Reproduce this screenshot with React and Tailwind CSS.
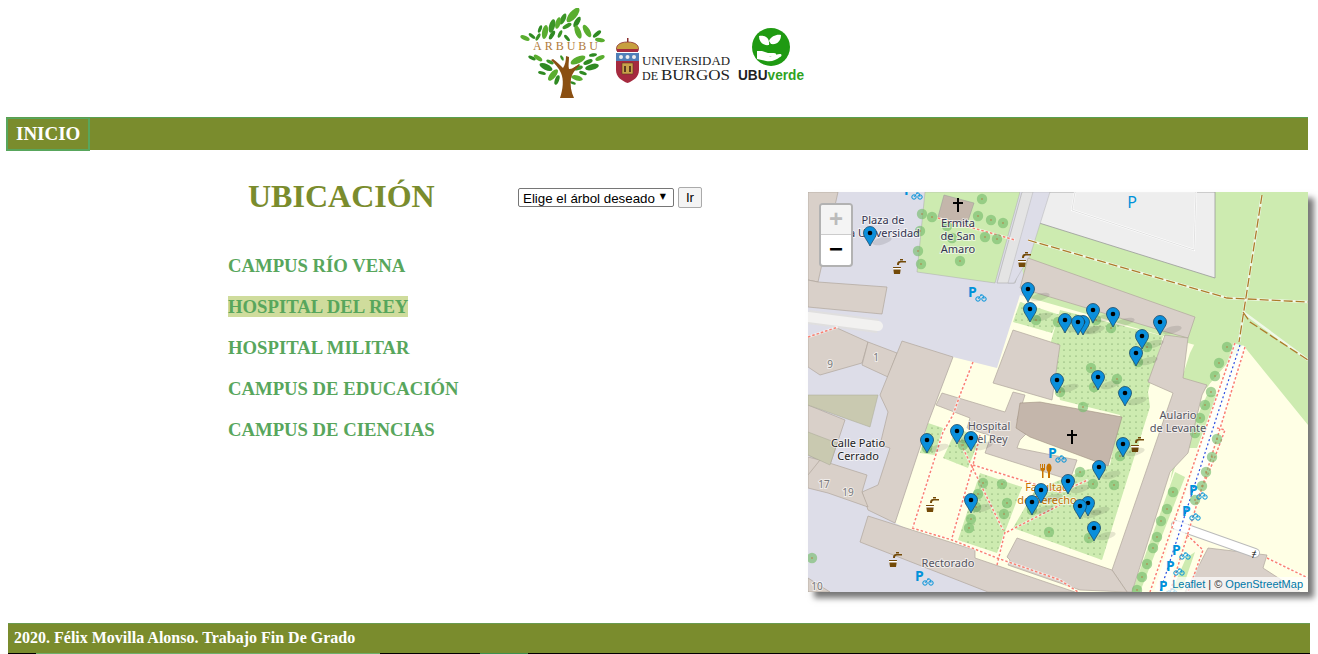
import React from 'react';

const serif = { fontFamily: '"Liberation Serif", serif' };

const trees = [
  [982,199],[922,214],[932,217],[978,216],[991,220],[1003,223],[947,226],[920,231],[985,237],[997,239],[952,238],[918,251],[921,264],[960,261],
  [1036,320],[1058,322],[1096,320],[1111,328],[1147,347],[1138,362],[1091,368],[1117,379],[1094,387],[1060,392],
  [1227,347],[1219,363],[1215,376],[1211,392],[963,445],[927,448],[983,483],[1002,484],[978,494],[1007,503],[976,507],[1004,514],[971,519],[969,528],
  [1049,532],[1032,510],[812,558],[1083,407],[1080,472],[1093,484],[1114,485],[1120,456],[1089,538],
  [1205,405],[1200,418],[1195,433],[1217,439],[1212,457],[1206,472],[1202,486],[1195,500],
  [1173,492],[1167,509],[1161,521],[1157,537],[1153,548],[1147,564],[1142,577],[1137,590],
];

const pins = [
  [870,233],[1028,289],[1030,309],[1065,320],[1083,322],[1078,322],[1093,310],[1113,314],[1160,322],[1142,336],[1136,353],
  [1057,380],[1098,377],[1125,393],[1123,444],[1099,467],[1068,481],[1041,490],[1032,502],[1088,503],[1080,506],[1094,528],
  [971,500],[971,438],[957,431],[927,440],
];

const bikes = [[910,190],[974,292],[1054,453],[1195,490],[1188,511],[1178,550],[1172,566],[1165,586],[921,576]];
const taps = [[898,267],[1023,260],[931,505],[894,560],[1136,445]];

const footways = [
  'M938 218L1015 240',
  'M808 337L838 327',
  'M973 362L960 395L953 415L943 432L913 527',
  'M912 528L952 540L997 558L1060 580L1078 592',
  'M980 435L973 465L952 538',
  'M953 428L1003 530',
  'M973 465L1060 492L1088 480',
  'M1007 532L1060 505',
  'M1005 532L997 565',
  'M1235 343L1150 592',
  'M1245 347L1170 592',
  'M1217 428L1225 430L1213 462L1195 505',
  'M1187 535L1203 550L1188 592',
  'M1267 558L1308 578',
];

const Pin = ({ x, y }) => (
  <g transform={`translate(${x} ${y})`}>
    <path d="M-6.500 0a6.500 6.500 0 0 1 13 0c0 3.500-3.500 7-6.500 13c-3-6-6.500-9.500-6.500-13z" fill="#0a8fdc" stroke="#1d4a66" strokeWidth="0.800" />
    <circle r="2.300" fill="#000" />
  </g>
);

const Bike = ({ x, y }) => (
  <g transform={`translate(${x} ${y})`} fill="none" stroke="#0092da">
    <text x="-6" y="5" fontSize="14" fontWeight="700" fill="#0092da" stroke="none" fontFamily="Noto Sans, sans-serif">P</text>
    <circle cx="4" cy="7" r="2.200" strokeWidth="1" />
    <circle cx="10" cy="7" r="2.200" strokeWidth="1" />
    <path d="M4 7l3-4h2l1 4M6 3h2" strokeWidth="0.800" />
  </g>
);

const Tap = ({ x, y }) => (
  <g transform={`translate(${x} ${y})`} fill="#734a08">
    <path d="M-5 0h8l-1 7h-6z" />
    <path d="M-5 1h8v1.500h-8z" fill="#fff" />
    <path d="M-1-2c0-3 1-4 3-4h6v1.500h-5c-1.500 0-2 1-2 2.500z" />
    <path d="M2-8h3v1.500h-3z" />
  </g>
);

const Cross = ({ x, y }) => (
  <path d={`M${x - 1} ${y - 7}h2v4h4v2h-4v8h-2v-8h-4v-2h4z`} fill="#000" />
);

const MapLabel = ({ x, y, lines, color = '#33334f', size = 11 }) => (
  <text fontSize={size} fontFamily="Noto Sans, sans-serif" fill={color} textAnchor="middle" stroke="#fff" strokeWidth="2" paintOrder="stroke" strokeOpacity="0.6">
    {lines.map((l, i) => (
      <tspan key={l} x={x} y={y + i * 13}>{l}</tspan>
    ))}
  </text>
);

const CampusMap = () => (
  <svg viewBox="808 192 500 400" className="block w-full h-full">
    <defs>
      <pattern id="dots" width="6" height="6" patternUnits="userSpaceOnUse">
        <rect width="6" height="6" fill="#cdebb0" />
        <circle cx="2" cy="2" r="0.600" fill="#5d8a4f" />
      </pattern>
    </defs>
    <rect x="808" y="192" width="500" height="400" fill="#dddde8" />

    {/* green to the right, field and access road */}
    <polygon points="1042,192 1308,192 1308,592 1100,592 1020,260" fill="#cdebb0" />
    <polygon points="1048,192 1215,192 1215,278 1036,222" fill="#eeeeee" stroke="#999" strokeWidth="0.800" />
    <polygon points="1075,192 1196,192 1194,250 1072,210" fill="none" stroke="#fff" strokeWidth="2" />
    <polygon points="1075,192 1196,192 1194,250 1072,210" fill="none" stroke="#ccc" strokeWidth="0.600" />
    <polygon points="1022,192 1044,192 1015,283 997,283" fill="#e4e4e4" stroke="#aaa" strokeWidth="0.600" />
    <polygon points="1033,192 1050,192 1030,256 1014,283 1008,283" fill="#dddde8" stroke="#aaa" strokeWidth="0.400" />
    <polygon points="925,192 1020,192 995,283 917,272" fill="#cdebb0" stroke="#aaa" strokeWidth="0.500" />
    <polygon points="944,195 974,203 967,224 938,217" fill="#c4b6ab" stroke="#999" strokeWidth="0.500" />

    {/* yellow ground */}
    <polygon points="1243,345 1308,425 1308,592 1132,592 1200,395" fill="#ffffe5" />
    <polygon points="953,357 997,368 1020,295 1195,345 1150,592 1040,592 895,523 928,423" fill="#ffffe5" />

    {/* gardens */}
    <polygon points="1060,310 1163,336 1148,392 1150,407 1102,560 1013,528 1035,490 1085,470 1110,465 1120,415 1060,400 1050,345" fill="url(#dots)" />
    <polygon points="1020,302 1060,315 1052,333 1013,322" fill="url(#dots)" />
    <polygon points="928,423 943,428 935,455 920,453" fill="url(#dots)" />
    <polygon points="957,428 980,438 968,468 943,458" fill="url(#dots)" />
    <polygon points="980,473 1022,487 997,553 958,540" fill="url(#dots)" />
    <polygon points="1195,322 1235,342 1207,388 1182,378 1190,353 1198,337" fill="#cdebb0" />
    <polygon points="1207,395 1217,395 1197,448 1183,448" fill="#cdebb0" />
    <polygon points="1175,472 1185,477 1140,592 1132,592" fill="#cdebb0" />
    <polygon points="1186,558 1195,552 1182,590 1172,590" fill="#cdebb0" />

    {/* buildings */}
    <g fill="#d9d0c9" stroke="#b0a69c" strokeWidth="0.700">
      <polygon points="808,192 838,192 818,282 808,280" />
      <polygon points="818,282 887,287 882,314 808,307 808,280" />
      <polygon points="808,337 837,328 868,342 862,363 820,375 808,367" />
      <polygon points="868,342 897,353 888,377 862,365" />
      <polygon points="902,341 953,357 928,423 895,523 868,510 862,492 878,485 890,448 880,445 888,412 880,395" />
      <polygon points="808,405 845,420 830,465 808,455" />
      <polygon points="808,457 820,460 812,475 808,475" />
      <polygon points="820,460 867,475 862,492 868,507 828,493 808,488 808,475" />
      <polygon points="868,516 975,550 975,558 1075,592 988,592 860,542" />
      <polygon points="808,578 830,592 808,592" />
      <polygon points="1028,258 1195,317 1188,338 1163,331 1060,300 1020,288" />
      <polygon points="1165,335 1188,338 1183,378 1207,385 1202,395 1188,453 1170,472 1132,592 1127,592 1112,570 1173,393 1148,382" />
      <polygon points="1017,538 1112,570 1127,592 1080,590 1008,565 1010,560 1007,557" />
      <polygon points="1013,330 1060,345 1052,400 993,383" />
      <polygon points="942,393 1005,412 1013,392 1025,395 1017,420 1027,433 1020,440 1017,448 1077,460 1070,480 985,453 991,436 967,428 970,418 936,405" />
      <polygon points="1208,548 1267,555 1263,568 1300,592 1185,592" />
    </g>
    <polygon points="808,395 878,395 870,427 808,405" fill="#c9c9b0" stroke="#a8a897" strokeWidth="0.500" />
    <polygon points="808,432 837,443 830,465 808,455" fill="#c9c9b0" stroke="#a8a897" strokeWidth="0.500" />
    <polygon points="1020,403 1040,402 1122,417 1108,466 1030,437 1016,428" fill="#c4b6ab" stroke="#a09080" strokeWidth="0.600" />

    {/* service roads */}
    <path d="M808 317L878 326" stroke="#e0dfdf" strokeWidth="14" />
    <path d="M808 317L878 326" stroke="#f2f1f0" strokeWidth="10" strokeLinecap="round" />
    <path d="M1176 525L1255 553" stroke="#bbb" strokeWidth="10" strokeLinecap="round" />
    <path d="M1176 525L1255 553" stroke="#fff" strokeWidth="8" strokeLinecap="round" />
    <text x="1254" y="557" fontSize="9" fontFamily="Noto Sans, sans-serif" textAnchor="middle" fill="#000">≠</text>

    {/* paths */}
    <g fill="none" stroke="#fff" strokeWidth="2.500" opacity="0.700">
      <path d="M1028 240L1227 298L1308 302" />
      <path d="M1262 195L1239 342" />
      <path d="M1243 312L1308 360" />
    </g>
    <g fill="none" stroke="#ad7b2a" strokeWidth="1.300" strokeDasharray="9 3">
      <path d="M1028 240L1227 298L1308 302" />
      <path d="M1262 195L1239 342" />
      <path d="M1243 312L1250 322L1308 360" />
    </g>
    <path d="M1240 345L1160 592" stroke="#fff" strokeWidth="12" opacity="0.800" />
    <g fill="none" stroke="#fff" strokeWidth="2.500" opacity="0.600">
      {footways.map((d) => <path key={d} d={d} />)}
    </g>
    <g fill="none" stroke="#fa8072" strokeWidth="1.500" strokeDasharray="2.500 2">
      {footways.map((d) => <path key={d} d={d} />)}
    </g>
    <path d="M1240 345L1160 592" fill="none" stroke="#2b4de0" strokeWidth="1.200" strokeDasharray="2 2.500" />

    {trees.map(([x, y]) => (
      <g key={`${x}-${y}`}>
        <circle cx={x} cy={y} r="5.200" fill="#78bd6e" opacity="0.650" />
        <circle cx={x} cy={y} r="0.800" fill="#b5763e" />
      </g>
    ))}

    {bikes.map(([x, y]) => <Bike key={`${x}-${y}`} x={x} y={y} />)}
    {taps.map(([x, y]) => <Tap key={`${x}-${y}`} x={x} y={y} />)}
    <Cross x={958} y={205} />
    <Cross x={1072} y={437} />
    <g fill="#c77400">
      <path d="M1040 464h1v4h1v-4h1v4h1v-4h1v6l-1.500 1v7h-1.500v-7l-1.500-1z" />
      <path d="M1048 478v-6c-2-1-2.500-8 1-8.500c3.500 0.500 3 7.500 1 8.500v6z" />
    </g>
    <text x="1132" y="208" fontSize="16" fontFamily="Noto Sans, sans-serif" textAnchor="middle" fill="#0092da">P</text>

    <MapLabel x={883} y={224} lines={['Plaza de', 'la Universidad']} />
    <MapLabel x={958} y={227} lines={['Ermita', 'de San', 'Amaro']} />
    <MapLabel x={989} y={430} lines={['Hospital', 'del Rey']} color="#55555f" />
    <MapLabel x={1178} y={419} lines={['Aulario', 'de Levante']} color="#55555f" />
    <MapLabel x={858} y={447} lines={['Calle Patio', 'Cerrado']} color="#222" />
    <MapLabel x={948} y={567} lines={['Rectorado']} color="#55555f" />
    <MapLabel x={1047} y={491} lines={['Facultad', 'de Derecho']} color="#c77400" />
    <MapLabel x={830} y={368} lines={['9']} color="#777" size={10} />
    <MapLabel x={876} y={361} lines={['1']} color="#777" size={10} />
    <MapLabel x={824} y={488} lines={['17']} color="#777" size={10} />
    <MapLabel x={848} y={496} lines={['19']} color="#777" size={10} />
    <MapLabel x={817} y={590} lines={['10']} color="#777" size={10} />

    {pins.map(([x, y]) => (
      <ellipse key={`s${x}-${y}`} cx={x + 12} cy={y + 8} rx="10" ry="3.500" fill="#000" opacity="0.100" transform={`rotate(-15 ${x + 12} ${y + 8})`} />
    ))}
    {pins.map(([x, y]) => <Pin key={`${x}-${y}`} x={x} y={y} />)}
  </svg>
);

// x, y, angle, half length, colour
const leaves = [
  [55,7,-50,9,'#59ad2f'],[45,11,-65,6,'#3b9427'],[40,15,-75,6,'#59ad2f'],[34,18,-75,7,'#3b9427'],[59,14,-60,6,'#2f8a22'],[27,24,-80,7,'#59ad2f'],[49,18,-30,5,'#3b9427'],
  [22,21,-70,4,'#2f8a22'],[7,30,25,5,'#59ad2f'],[14,28,40,4,'#2f8a22'],[20,29,-60,4,'#3b9427'],[34,27,-60,5,'#2f8a22'],[42,26,-65,4,'#3b9427'],[49,30,50,4,'#2f8a22'],
  [60,24,70,7,'#59ad2f'],[69,23,60,7,'#59ad2f'],[79,26,-40,5,'#2f8a22'],[82,32,10,5,'#59ad2f'],
  [14,50,25,4,'#2f8a22'],[20,50,35,5,'#59ad2f'],[28,59,25,7,'#2f8a22'],[32,54,25,4,'#3b9427'],[24,65,15,4,'#2f8a22'],[35,67,-50,7,'#59ad2f'],[39,72,-70,5,'#2f8a22'],
  [44,50,60,3,'#3b9427'],[60,52,-25,8,'#59ad2f'],[75,47,-10,4,'#2f8a22'],[82,50,-25,5,'#59ad2f'],[70,54,-25,5,'#2f8a22'],[74,59,-15,7,'#2f8a22'],[60,60,-15,5,'#3b9427'],
  [65,65,20,4,'#2f8a22'],[59,70,15,6,'#59ad2f'],[55,75,20,3,'#2f8a22'],
];

const ArbubuLogo = () => (
  <svg viewBox="0 0 90 92" width="90" height="92" className="block mt-[8px]">
    {leaves.map(([x, y, r, l, c]) => (
      <ellipse key={`${x}-${y}`} cx={x} cy={y} rx={l} ry={l * 0.42} fill={c} transform={`rotate(${r} ${x} ${y})`} />
    ))}
    <path d="M42 90c3-9 4-18 1-25c-2-5-6-9-10-13l2-1c4 3 7 6 10 9c2-3 3-7 3-12l3 1c0 5-1 9 0 12c3 0 6-2 10-5l1 1c-4 4-8 8-9 14c-1 6 0 13 3 19z" fill="#8a4f12" />
    <text x="15" y="42" fontSize="12" textLength="65" fill="#b07a3a" fontFamily="Liberation Serif, serif">ARBUBU</text>
  </svg>
);

const UbuLogo = () => (
  <svg viewBox="0 0 117 45" width="117" height="45" className="block mt-[38px]">
    <path d="M2 15h23v17c0 7-6 11-11.500 13c-5.500-2-11.500-6-11.500-13z" fill="#a52a3f" />
    <path d="M2 15h23v8h-23z" fill="#4f7fb8" />
    <circle cx="7" cy="19" r="2" fill="#eee" />
    <circle cx="13.500" cy="19" r="2" fill="#eee" />
    <circle cx="20" cy="19" r="2" fill="#eee" />
    <path d="M8 25h11v11h-11z" fill="#c9a24a" stroke="#5a3a20" strokeWidth="0.600" />
    <path d="M10 28h2v6h-2zM15 28h2v6h-2z" fill="#5a3a20" />
    <path d="M3 13c-2-5 2-9 10.500-9c8.500 0 12.500 4 10.500 9z" fill="#c79f3f" stroke="#8a2c2c" strokeWidth="0.800" />
    <path d="M3 11h21v3h-21z" fill="#a52a3f" />
    <path d="M13 0h1.500v4h-1.500z" fill="#8a2c2c" />
    <text x="28" y="27" fontSize="13" textLength="88" lengthAdjust="spacingAndGlyphs" fontFamily="Liberation Serif, serif" fill="#222">UNIVERSIDAD</text>
    <text x="28" y="42" fontSize="12" fontFamily="Liberation Serif, serif" fill="#222">DE</text>
    <text x="47" y="42" fontSize="15" textLength="69" lengthAdjust="spacingAndGlyphs" fontFamily="Liberation Serif, serif" fill="#222">BURGOS</text>
  </svg>
);

const UbuVerdeLogo = () => (
  <svg viewBox="0 0 68 56" width="68" height="56" className="block mt-[27px]">
    <circle cx="34" cy="20" r="19" fill="#1f9a12" />
    <path d="M22 9c6-1 11 2 10 9c-6 1-10-3-10-9zM32 14c2-5 8-7 12-6c0 6-4 10-10 9z" fill="#fff" />
    <path d="M20 24h5l6 2h6c3 0 3 3 0 3h-5c4 1 8-2 11-2c2 0 2 2 0 3c-4 3-8 5-14 4l-9-2z" fill="#fff" />
    <text x="1" y="53" fontSize="14" textLength="66" lengthAdjust="spacingAndGlyphs" fontWeight="700" fontFamily="Liberation Sans, sans-serif" fill="#222">UBU<tspan fill="#2fa31f">verde</tspan></text>
  </svg>
);

const CAMPUS = ['CAMPUS RÍO VENA', 'HOSPITAL DEL REY', 'HOSPITAL MILITAR', 'CAMPUS DE EDUCACIÓN', 'CAMPUS DE CIENCIAS'];

const App = () => {
  return (
    <div className="w-[1318px] h-[654px] overflow-hidden bg-white" style={serif}>
      <header className="h-[117px] flex justify-center items-start pl-[4px] gap-[6px]">
        <ArbubuLogo />
        <UbuLogo />
        <UbuVerdeLogo />
      </header>

      <nav className="ml-[6px] w-[1302px] h-[33px] bg-[#7a8c2d] border-t border-[#5a9f50]">
        <a className="inline-block h-[33px] w-[84px] border-2 border-t border-[#58a65c] pl-[8px] text-[19px] leading-[30px] font-bold text-white">INICIO</a>
      </nav>

      <main className="flex pl-[228px] mt-[42px]">
        <div className="w-[290px]">
          <h1 className="ml-[20px] mt-[-14px] text-[32px] leading-[37px] font-bold text-[#7a8c2d]">UBICACIÓN</h1>
          <ul className="mt-[40px] flex flex-col gap-[20px]">
            {CAMPUS.map((c) => (
              <li key={c} className="h-[21px] text-[18.700px] leading-[21px] font-bold text-[#58a65c]">
                <span className={c === 'HOSPITAL DEL REY' ? 'inline-block bg-[#cfdc9c]' : 'inline-block'}>{c}</span>
              </li>
            ))}
          </ul>
        </div>
        <div className="w-[290px] flex items-start gap-[4px]">
          <div className="relative w-[156px] h-[19px] mt-[-4px]">
            <select className="block appearance-none w-full h-full border border-[#767676] rounded-[2px] bg-white text-[13.330px] text-black pl-[4px] [font-family:'Liberation_Sans',sans-serif]">
              <option>Elige el árbol deseado</option>
            </select>
            <span className="absolute right-[8px] top-[4px] text-[8px] leading-[9px] text-black pointer-events-none [font-family:'DejaVu_Sans',sans-serif]">▼</span>
          </div>
          <button className="w-[24px] h-[21px] border border-[#aaa] rounded-[2px] bg-[#f4f4f4] text-[13.330px] leading-[19px] text-black mt-[-5px] [font-family:'Liberation_Sans',sans-serif]">Ir</button>
        </div>
        <div className="relative w-[500px] h-[400px] shadow-[6px_6px_6px_#777]">
          <CampusMap />
          <div className="absolute left-[11px] top-[11px] w-[34px] h-[64px] border-2 border-black/30 rounded-[4px] bg-white flex flex-col [font-family:'Liberation_Sans',sans-serif]">
            <span className="h-[30px] bg-[#f4f4f4] border-b border-[#ccc] rounded-t-[2px] text-center text-[24px] leading-[28px] font-bold text-[#bbb]">+</span>
            <span className="h-[30px] text-center text-[24px] leading-[28px] font-bold text-black">−</span>
          </div>
          <div className="absolute right-0 bottom-0 h-[15px] px-[5px] bg-white/70 text-[11px] leading-[15px] text-[#333] [font-family:'Liberation_Sans',sans-serif]">
            <span className="text-[#0078a8]">Leaflet</span> | © <span className="text-[#0078a8]">OpenStreetMap</span>
          </div>
        </div>
      </main>

      <footer className="ml-[8px] mt-[31px] w-[1302px] h-[31px] bg-[#7a8c2d] border-t border-[#6a9a50]">
        <p className="pl-[6px] h-[29px] text-[16px] leading-[28px] font-bold text-white">2020. Félix Movilla Alonso. Trabajo Fin De Grado</p>
        <div className="h-[1px] flex bg-black">
          <span className="ml-[28px] w-[344px] bg-[#6fae6a]" />
          <span className="ml-[100px] w-[48px] bg-[#3f8f4f]" />
        </div>
      </footer>
    </div>
  );
};

export default App;
